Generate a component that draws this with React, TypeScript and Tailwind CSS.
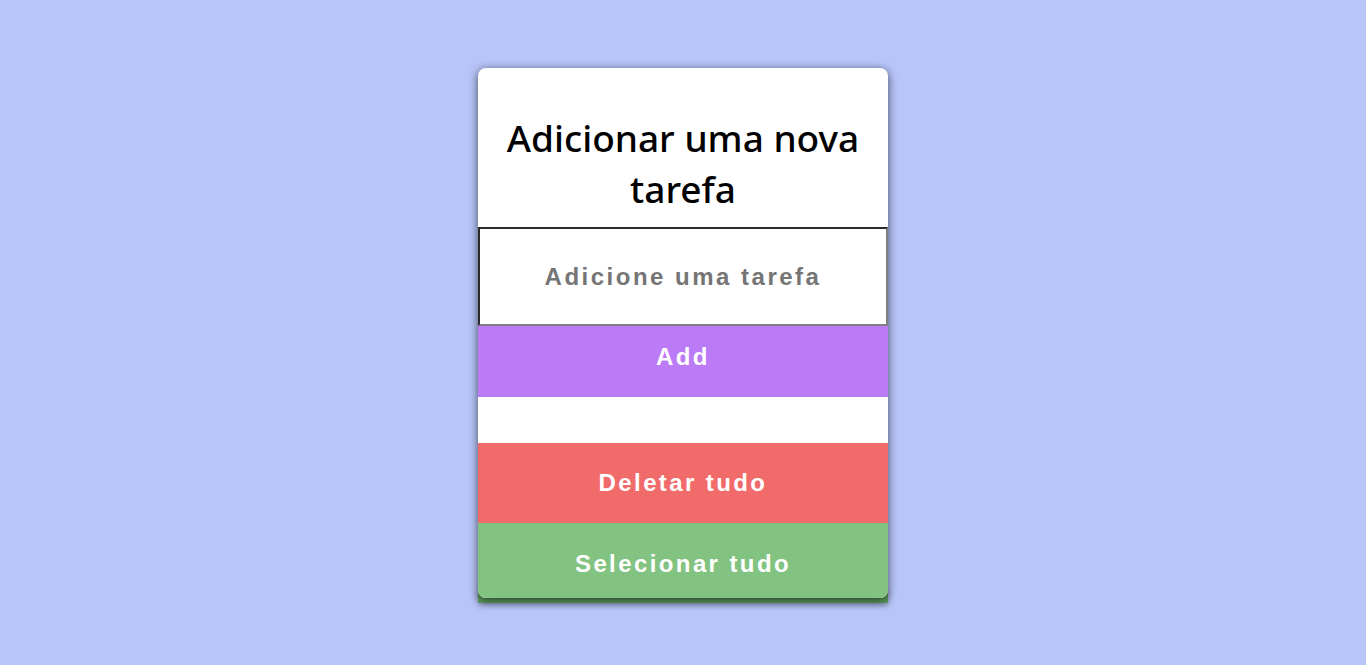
import React from "react";

export default function App() {
  const btn =
    "w-full flex items-center justify-center text-white font-bold text-[24px] tracking-[2.4px] font-['Liberation_Sans',Arial,sans-serif]";
  return (
    <div className="w-full h-[665px] bg-[#b8c5f9] flex justify-center">
      <div className="relative mt-[68px] w-[410px] h-[530px]">
        <div className="absolute left-0 right-0 bottom-[-5px] h-[14px] bg-[#5d9d60] shadow-[0_2px_6px_rgba(0,0,0,0.35)]" />
        <div className="relative flex flex-col w-full h-full bg-white rounded-lg shadow-[0_2px_10px_rgba(0,0,0,0.65)]">
          <h1 className="pt-[44px] pb-[13px] px-4 text-center text-black text-[37px] leading-[51px] font-['Noto_Sans','Open_Sans',sans-serif] font-medium">
            Adicionar uma nova tarefa
          </h1>
          <input
            placeholder="Adicione uma tarefa"
            className="w-full h-[99px] border-2 border-t-[#2b2b2b] border-l-[#2b2b2b] border-b-[#7f7f7f] border-r-[#7f7f7f] text-center font-bold text-[24px] tracking-[2.5px] font-['Liberation_Sans',Arial,sans-serif] placeholder:text-[#757575] outline-none"
          />
          <button className={btn + " h-[71px] bg-[#bb7af6] pb-[9px]"}>Add</button>
          <div className="h-[46px]" />
          <button className={btn + " h-[80px] bg-[#f16b6b]"}>Deletar tudo</button>
          <button className={btn + " h-[75px] bg-[#83c381] rounded-b-lg pt-[6px]"}>
            Selecionar tudo
          </button>
        </div>
      </div>
    </div>
  );
}
